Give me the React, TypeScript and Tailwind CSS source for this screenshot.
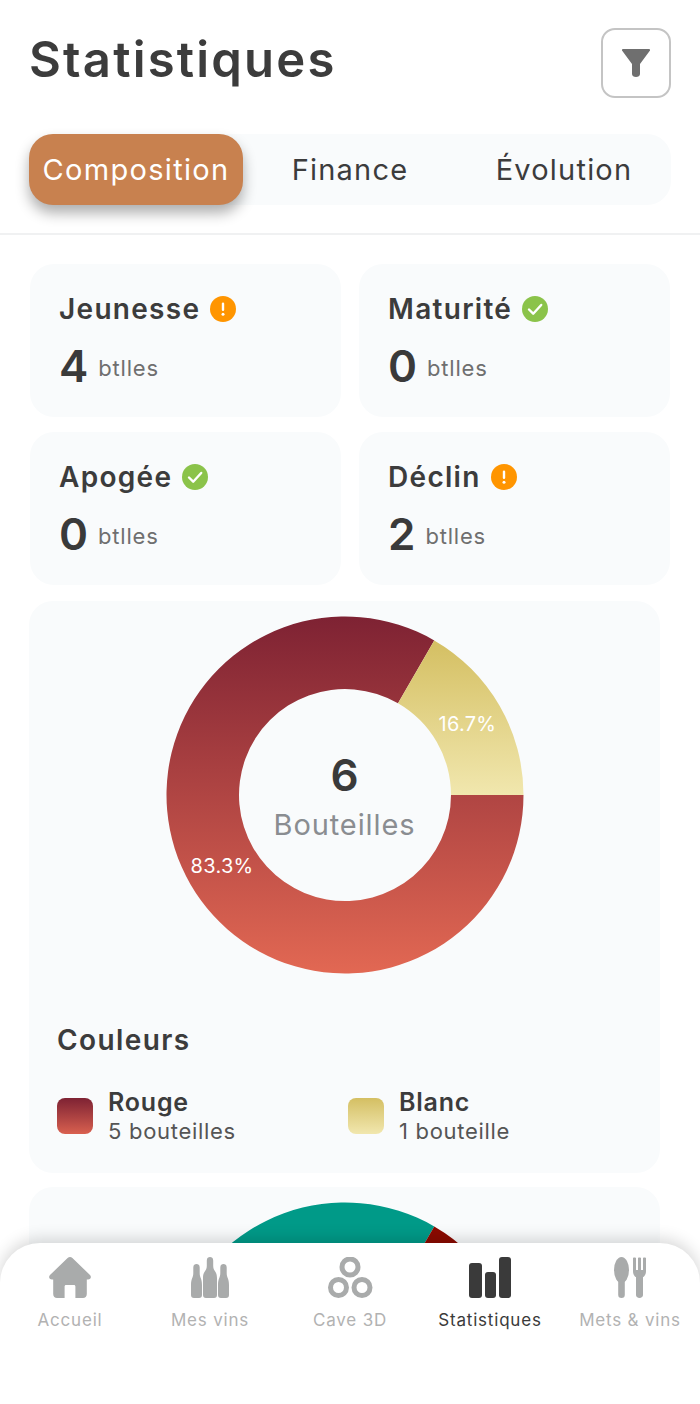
import type { ReactNode } from 'react';

const tabs = ['Composition', 'Finance', 'Évolution'];

const stages = [
  { title: 'Jeunesse', count: 4, ok: false },
  { title: 'Maturité', count: 0, ok: true },
  { title: 'Apogée', count: 0, ok: true },
  { title: 'Déclin', count: 2, ok: false },
];

const bigSlice =
  'M357.5 179 A178.5 178.5 0 1 1 268.25 24.4 L232 87.2 A106 106 0 1 0 285 179 Z';
const smallSlice =
  'M268.25 24.4 A178.5 178.5 0 0 1 357.5 179 L285 179 A106 106 0 0 0 232 87.2 Z';

const StatusIcon = ({ ok }: { ok: boolean }) => (
  <svg width="26" height="26" viewBox="0 0 26 26" className="shrink-0">
    <circle cx="13" cy="13" r="13" fill={ok ? '#8bc34a' : '#ff9500'} />
    {ok ? (
      <path d="M7 13.5l4.2 4.2L19.2 9" fill="none" stroke="#fff" strokeWidth="2.4" strokeLinecap="round" strokeLinejoin="round" />
    ) : (
      <>
        <rect x="11.8" y="6.5" width="2.4" height="8.5" rx="1.2" fill="#fff" />
        <circle cx="13" cy="18.3" r="1.5" fill="#fff" />
      </>
    )}
  </svg>
);

const StageCard = ({ title, count, ok }: { title: string; count: number; ok: boolean }) => (
  <div className="h-[153px] rounded-[24px] bg-[#f9fbfc] pl-[29px] pt-[26px]">
    <div className="flex h-[38px] items-center gap-[10px]">
      <span className="text-[28px] font-semibold tracking-[1.3px] text-[#3c3c3c]">{title}</span>
      <StatusIcon ok={ok} />
    </div>
    <div className="mt-[10px] flex h-[56px] items-center gap-[11px]">
      <span className="text-[44px] font-semibold tracking-[-1px] text-[#3a3a3a]">{count}</span>
      <span className="mt-[4px] text-[22px] tracking-[0.8px] text-[#6f6f6f]">btlles</span>
    </div>
  </div>
);

const LegendItem = ({ name, detail, swatch }: { name: string; detail: string; swatch: string }) => (
  <div className="flex items-center gap-[15px]">
    <div className={`h-[36px] w-[36px] rounded-[8px] ${swatch}`} />
    <div className="flex flex-col">
      <span className="text-[25px] leading-[30px] font-semibold tracking-[0.8px] text-[#3c3c3c]">{name}</span>
      <span className="text-[22px] leading-[28px] tracking-[0.7px] text-[#555555]">{detail}</span>
    </div>
  </div>
);

const NavItem = ({ label, active, children }: { label: string; active?: boolean; children: ReactNode }) => (
  <div className="flex flex-col items-center">
    <div className="flex h-[41px] items-center justify-center">{children}</div>
    <span className={`mt-[12px] text-[17px] leading-[20px] tracking-[0.8px] ${active ? 'text-[#3a3a3a]' : 'text-[#b2b2b2]'}`}>
      {label}
    </span>
  </div>
);

const HomeIcon = () => (
  <svg width="42" height="41" viewBox="0 0 42 41" fill="#a9abab">
    <path d="M18.6 1 L1 18 C-0.8 19.8 0.4 22.4 3 22.4 H4.2 V37 C4.2 39.4 5.8 41 8 41 H15.6 V29.5 C15.6 28.6 16.2 28 17 28 H25 C25.8 28 26.4 28.6 26.4 29.5 V41 H34 C36.2 41 37.8 39.4 37.8 37 V22.4 H39 C41.6 22.4 42.8 19.8 41 18 L23.4 1 C22 -0.3 20 -0.3 18.6 1 Z" />
  </svg>
);

// neck and body drawn as one rounded silhouette
const Bottle = ({ x, top, w }: { x: number; top: number; w: number }) => {
  const mid = x + w / 2;
  return (
    <path
      d={`M${mid - 3.2} ${top + 3.4} C${mid - 3.2} ${top - 1} ${mid + 3.2} ${top - 1} ${mid + 3.2} ${top + 3.4} V${top + 9} C${mid + 3.2} ${top + 14} ${x + w} ${top + 14} ${x + w} ${top + 21} V38 C${x + w} 40 ${x + w - 1} 41 ${x + w - 3} 41 H${x + 3} C${x + 1} 41 ${x} 40 ${x} 38 V${top + 21} C${x} ${top + 14} ${mid - 3.2} ${top + 14} ${mid - 3.2} ${top + 9} Z`}
    />
  );
};

const BottlesIcon = () => (
  <svg width="38" height="41" viewBox="0 0 38 41" fill="#a9abab">
    <Bottle x={0} top={7} w={11} />
    <Bottle x={12} top={0} w={14} />
    <Bottle x={27} top={7} w={11} />
  </svg>
);

const RingsIcon = () => (
  <svg width="45" height="41" viewBox="0 0 45 41" fill="none" stroke="#a9abab" strokeWidth="5">
    <circle cx="22" cy="10" r="8" />
    <circle cx="10.5" cy="30.5" r="8" />
    <circle cx="34" cy="30.5" r="8" />
  </svg>
);

const BarsIcon = () => (
  <svg width="42" height="41" viewBox="0 0 42 41" fill="#3a3a3a">
    <rect x="0" y="6" width="13" height="35" rx="3" />
    <rect x="16" y="15" width="11" height="26" rx="3" />
    <rect x="30" y="0" width="12" height="41" rx="3" />
  </svg>
);

const CutleryIcon = () => (
  <svg width="33" height="41" viewBox="0 0 33 41" fill="#a9abab">
    <ellipse cx="7.5" cy="13" rx="7.5" ry="13" />
    <rect x="4.2" y="20" width="6.6" height="21" rx="3.3" />
    <path d="M19 1.2 C19 0.4 22 0.4 22 1.2 V13 H24 V1.2 C24 0.4 27 0.4 27 1.2 V13 H29 V1.2 C29 0.4 32 0.4 32 1.2 V14 C32 18 29.6 20 29 20 V38 C29 39.6 27.6 41 25.5 41 C23.4 41 22 39.6 22 38 V20 C21.4 20 19 18 19 14 Z" />
  </svg>
);

export default function App() {
  return (
    <div className="relative h-[1404px] w-[700px] overflow-hidden bg-white font-['Inter','Noto_Sans',sans-serif]">
      {/* Header */}
      <div className="flex h-[134px] items-start justify-between pl-[29px] pr-[29px] pt-[28px]">
        <h1 className="text-[49px] leading-[64px] font-semibold tracking-[2.2px] text-[#3c3c3c]">Statistiques</h1>
        <button className="flex h-[70px] w-[70px] items-center justify-center rounded-[14px] border-2 border-[#c4c4c4] bg-white">
          <svg width="28" height="28" viewBox="0 0 28 28" fill="#6f6f6f">
            <path d="M1 0 H27 C28 0 28.4 1 27.8 1.8 L18 15 V25 C18 27 16.2 28 14 28 C11.8 28 10 27 10 25 V15 L0.2 1.8 C-0.4 1 0 0 1 0 Z" />
          </svg>
        </button>
      </div>

      {/* Tabs */}
      <div className="border-b-2 border-[#f0f1f2] pb-[28px]">
        <div className="mx-[29px] grid h-[71px] w-[642px] grid-cols-3 rounded-[24px] bg-[#f9fbfc]">
          {tabs.map((tab, i) => (
            <div
              key={tab}
              className={
                i === 0
                  ? 'flex items-center justify-center rounded-[24px] bg-[#c8814f] text-[29px] tracking-[1.3px] text-white shadow-[0_8px_14px_rgba(0,0,0,0.32)]'
                  : 'flex items-center justify-center text-[29px] tracking-[1.2px] text-[#3c3c3c]'
              }
            >
              {tab}
            </div>
          ))}
        </div>
      </div>

      {/* Maturity cards */}
      <div className="mt-[29px] ml-[30px] grid w-[640px] grid-cols-2 gap-x-[18px] gap-y-[15px]">
        {stages.map((s) => (
          <StageCard key={s.title} {...s} />
        ))}
      </div>

      {/* Colour breakdown */}
      <div className="ml-[29px] mt-[16px] h-[572px] w-[631px] rounded-[24px] bg-[#f9fbfc] pt-[15px]">
        <div className="relative mx-auto h-[358px] w-[358px]">
          <svg width="358" height="358" viewBox="0 0 358 358">
            <defs>
              <linearGradient id="red" gradientUnits="userSpaceOnUse" x1="0" y1="0" x2="0" y2="358">
                <stop offset="0" stopColor="#7e2233" />
                <stop offset="1" stopColor="#e26853" />
              </linearGradient>
              <linearGradient id="gold" gradientUnits="userSpaceOnUse" x1="0" y1="24" x2="0" y2="179">
                <stop offset="0" stopColor="#d4bf62" />
                <stop offset="1" stopColor="#f1e7ae" />
              </linearGradient>
            </defs>
            <path d={bigSlice} fill="url(#red)" />
            <path d={smallSlice} fill="url(#gold)" />
          </svg>
          <span className="absolute left-[273px] top-[94px] text-[20px] leading-[28px] tracking-[0.3px] text-white">16.7%</span>
          <span className="absolute left-[25px] top-[236px] text-[20px] leading-[28px] tracking-[0.3px] text-white">83.3%</span>
          <div className="absolute inset-0 flex flex-col items-center pt-[130px]">
            <span className="text-[44px] leading-[58px] font-semibold text-[#3a3a3a]">6</span>
            <span className="mt-[1px] text-[29px] leading-[40px] tracking-[0.9px] text-[#8a8d91]">Bouteilles</span>
          </div>
        </div>
        <div className="px-[28px]">
          <h2 className="mt-[46px] text-[28px] leading-[40px] font-semibold tracking-[1.4px] text-[#3c3c3c]">Couleurs</h2>
          <div className="mt-[27px] grid grid-cols-[291px_1fr]">
            <LegendItem name="Rouge" detail="5 bouteilles" swatch="bg-gradient-to-b from-[#7e2233] to-[#d9604f]" />
            <LegendItem name="Blanc" detail="1 bouteille" swatch="bg-gradient-to-b from-[#d4bf62] to-[#f1e7ae]" />
          </div>
        </div>
      </div>

      {/* Second chart, cut off by the nav */}
      <div className="ml-[29px] mt-[14px] h-[572px] w-[631px] rounded-[24px] bg-[#f9fbfc] pt-[15px]">
        <svg width="358" height="358" viewBox="0 0 358 358" className="mx-auto block">
          <path d={bigSlice} fill="#009a88" />
          <path d={smallSlice} fill="#8b0a00" />
        </svg>
      </div>

      {/* Bottom nav */}
      <nav className="absolute bottom-0 left-0 grid h-[161px] w-[700px] grid-cols-5 rounded-t-[40px] bg-white pt-[14px] shadow-[0_-4px_16px_rgba(0,0,0,0.16)]">
        <NavItem label="Accueil"><HomeIcon /></NavItem>
        <NavItem label="Mes vins"><BottlesIcon /></NavItem>
        <NavItem label="Cave 3D"><RingsIcon /></NavItem>
        <NavItem label="Statistiques" active><BarsIcon /></NavItem>
        <NavItem label="Mets & vins"><CutleryIcon /></NavItem>
      </nav>
    </div>
  );
}
